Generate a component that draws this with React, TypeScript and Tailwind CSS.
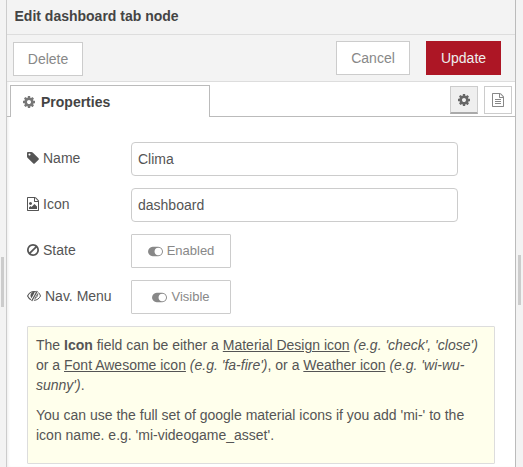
import type { ReactNode } from 'react';

const COG =
  'M1152 896q0-106-75-181t-181-75-181 75-75 181 75 181 181 75 181-75 75-181zm512-109v222q0 12-8 23t-20 13l-185 28q-19 54-39 91 35 50 107 138 10 12 10 25t-9 23q-27 37-99 108t-94 71q-12 0-26-9l-138-108q-44 23-91 38-16 136-29 186-7 28-36 28h-222q-14 0-24.500-8.500t-11.500-21.500l-28-184q-49-16-90-37l-141 107q-10 9-25 9-14 0-25-11-126-114-165-168-7-10-7-23 0-12 8-23 15-21 51-66.500t54-70.500q-27-50-41-99l-183-27q-13-2-21-12.500t-8-23.500v-222q0-12 8-23t19-13l186-28q14-46 39-92-40-57-107-138-10-12-10-24 0-10 9-23 26-36 98.500-107.500t94.500-71.500q13 0 26 10l138 107q44-23 91-38 16-136 29-186 7-28 36-28h222q14 0 24.500 8.500t11.500 21.500l28 184q49 16 90 37l142-107q9-9 24-9 13 0 25 10 129 119 165 170 7 8 7 22 0 12-8 23-15 21-51 66.500t-54 70.500q26 50 41 98l183 28q13 2 21 12.500t8 23.500z';
const TAG =
  'M576 448q0-53-37.500-90.500t-90.500-37.500-90.500 37.500-37.500 90.500 37.500 90.500 90.500 37.500 90.500-37.500 37.500-90.500zm1067 576q0 53-37 90l-491 492q-39 37-91 37-53 0-90-37l-715-716q-38-37-64.500-101t-26.500-117v-416q0-52 38-90t90-38h416q53 0 117 26.500t102 64.500l715 714q37 39 37 91z';
const PAGE =
  'M1596 380q28 28 48 76t20 88v1152q0 40-28 68t-68 28h-1344q-40 0-68-28t-28-68v-1600q0-40 28-68t68-28h896q40 0 88 20t76 48zm-444-244v376h376q-10-29-22-41l-313-313q-12-12-41-22zm384 1528v-1024h-416q-40 0-68-28t-28-68v-416h-768v1536h1280z';
const PAGE_LINES =
  'M512 800q0-14 9-23t23-9h704q14 0 23 9t9 23v64q0 14-9 23t-23 9h-704q-14 0-23-9t-9-23v-64zm736 224q14 0 23 9t9 23v64q0 14-9 23t-23 9h-704q-14 0-23-9t-9-23v-64q0-14 9-23t23-9h704zm0 256q14 0 23 9t9 23v64q0 14-9 23t-23 9h-704q-14 0-23-9t-9-23v-64q0-14 9-23t23-9h704z';
const PAGE_IMAGE =
  'M1408 1216v320h-1024v-192l192-192 128 128 384-384zm-832-192q-80 0-136-56t-56-136 56-136 136-56 136 56 56 136-56 136-136 56z';
const BAN =
  'M1440 893q0-161-87-295l-754 753q137 89 297 89 111 0 211.500-43.500t173.500-116.500 116-174.500 43-212.500zm-999 299l755-754q-135-91-300-91-148 0-273 73t-198 199-73 274q0 162 89 299zm1223-299q0 157-61 300t-163.500 246-245 164-298.500 61-298.500-61-245-164-163.500-246-61-300 61-299.500 163.500-245.500 245-164 298.500-61 298.500 61 245 164 163.500 245.500 61 299.500z';
const TOGGLE =
  'M0 896q0-130 51-248.500t136.500-204 204-136.500 248.500-51h768q130 0 248.500 51t204 136.500 136.500 204 51 248.500-51 248.500-136.500 204-204 136.500-248.500 51h-768q-130 0-248.500-51t-204-136.500-136.500-204-51-248.500zm1408 512q104 0 198.500-40.500t163.500-109.500 109.500-163.500 40.500-198.500-40.500-198.500-109.500-163.500-163.500-109.500-198.500-40.500-198.500 40.500-163.500 109.500-109.500 163.500-40.500 198.500 40.500 198.500 109.500 163.500 163.500 109.500 198.500 40.500z';

function Icon({ d }: { d: string }) {
  return (
    <svg viewBox="128 0 1536 1792" className="h-[14px] w-[12px] shrink-0" fill="currentColor">
      <path d={d} />
    </svg>
  );
}

function LowVisionIcon() {
  return (
    <svg viewBox="0 0 14 14" className="h-[14px] w-[14px] shrink-0" fill="none" stroke="currentColor">
      <path d="M9 2.7C4.800 1.900 1.900 4.300.6 7c.7 1.500 1.800 2.800 3.300 3.700" strokeWidth="1.100" />
      <path d="M7.800 3.300 4.500 9.200C3 7.700 3.100 4.600 5 3.500c.8-.5 1.800-.5 2.800-.2z" fill="currentColor" stroke="none" />
      <path d="M10.300 2 4.700 12" strokeWidth="1.300" />
      <path d="M11.400 3.500c1 .9 1.700 2.100 2.100 3.500-1.200 2.500-3.500 4.300-6.600 4.300" strokeWidth="1" />
      <path d="M10.700 4.700c.3 2.200-.9 3.900-2.900 4.900z" strokeWidth=".8" />
    </svg>
  );
}

function Row({ icon, label, children }: { icon: ReactNode; label: string; children: ReactNode }) {
  return (
    <div className="flex h-[34px] items-center">
      <div className="flex w-[104px] shrink-0 items-center gap-1 pb-[2px] leading-5">
        {icon}
        <span>{label}</span>
      </div>
      {children}
    </div>
  );
}

function Field({ value }: { value: string }) {
  return (
    <input
      defaultValue={value}
      className="h-[34px] w-[327px] rounded border border-[#ccc] bg-white px-[6px] text-sm text-[#555] outline-none"
    />
  );
}

function Toggle({ label }: { label: string }) {
  return (
    <button className="flex h-[34px] w-[100px] items-center justify-center gap-[4px] rounded-[1px] border border-[#ccc] bg-white text-[13px] text-[#888]">
      <svg viewBox="0 0 2048 1792" className="h-[13px] w-[15px]" fill="currentColor">
        <path d={TOGGLE} />
      </svg>
      {label}
    </button>
  );
}

export default function App() {
  return (
    <div className="flex h-[467px] w-[523px] overflow-hidden bg-[#f3f3f3] font-['Liberation_Sans',Arial,sans-serif] text-sm text-[#555]">
      <div className="w-[6px] shrink-0 pl-px pt-[257px]">
        <div className="h-[50px] w-[3px] bg-[#ccc]" />
      </div>

      <div className="flex w-[510px] shrink-0 flex-col border-x border-l-[#ccc] border-r-[#bbb] bg-white shadow-[inset_2px_0_3px_-1px_rgba(0,0,0,0.08)]">
        <header className="h-[35px] border-b border-[#ddd] bg-[#f3f3f3] pl-[7.500px] pt-[6px] font-bold leading-5 text-[#444]">
          Edit dashboard tab node
        </header>

        <div className="flex h-[47px] items-start border-b border-[#ddd] bg-[#f3f3f3] pl-[6px] pr-[14px] pt-[6px]">
          <button className="mt-px h-[34px] w-[70px] border border-[#ccc] bg-white text-[#888]">Delete</button>
          <button className="ml-auto h-[34px] w-[74px] border border-[#ccc] bg-white text-[#888]">Cancel</button>
          <button className="ml-4 h-[34px] w-[75px] bg-[#ad1625] text-[#eee]">Update</button>
        </div>

        <div className="flex h-[35px] shrink-0">
          <div className="w-[3px] border-b border-[#bbb]" />
          <div className="mt-[3px] flex w-[200px] items-center gap-[6px] border-x border-t border-[#bbb] bg-white pl-[12px] font-bold text-[#444]">
            <span className="text-[#777]">
              <Icon d={COG} />
            </span>
            Properties
          </div>
          <div className="flex grow items-start justify-end gap-[6px] border-b border-[#bbb] pr-[3px] pt-[4px]">
            <button className="flex h-[28px] w-[28px] items-center justify-center border border-b-2 border-[#ccc] border-b-[#aaa] bg-[#efefef] text-[#666]">
              <Icon d={COG} />
            </button>
            <button className="flex h-[28px] w-[28px] items-center justify-center border border-[#ccc] bg-white text-[#888]">
              <Icon d={PAGE + PAGE_LINES} />
            </button>
          </div>
        </div>

        <main className="flex flex-col gap-3 pl-5 pt-[25px]">
          <Row icon={<Icon d={TAG} />} label="Name">
            <Field value="Clima" />
          </Row>
          <Row icon={<Icon d={PAGE + PAGE_IMAGE} />} label="Icon">
            <Field value="dashboard" />
          </Row>
          <Row icon={<Icon d={BAN} />} label="State">
            <Toggle label="Enabled" />
          </Row>
          <Row icon={<LowVisionIcon />} label="Nav. Menu">
            <Toggle label="Visible" />
          </Row>
          <section className="h-[138px] w-[468px] rounded-[1px] border border-[#ddd] bg-[#ffffec] p-2 leading-5">
            <p className="mb-[10px]">
              The <b>Icon</b> field can be either a <u>Material Design icon</u> <i>(e.g. 'check', 'close')</i>
              <br />
              or a <u>Font Awesome icon</u> <i>(e.g. 'fa-fire')</i>, or a <u>Weather icon</u> <i>(e.g. 'wi-wu-sunny')</i>.
            </p>
            <p>
              You can use the full set of google material icons if you add 'mi-' to the icon name. e.g.
              'mi-videogame_asset'.
            </p>
          </section>
        </main>
      </div>

      <div className="pl-[2px] pt-[255px]">
        <div className="h-[50px] w-[3px] bg-[#ccc]" />
      </div>
    </div>
  );
}
